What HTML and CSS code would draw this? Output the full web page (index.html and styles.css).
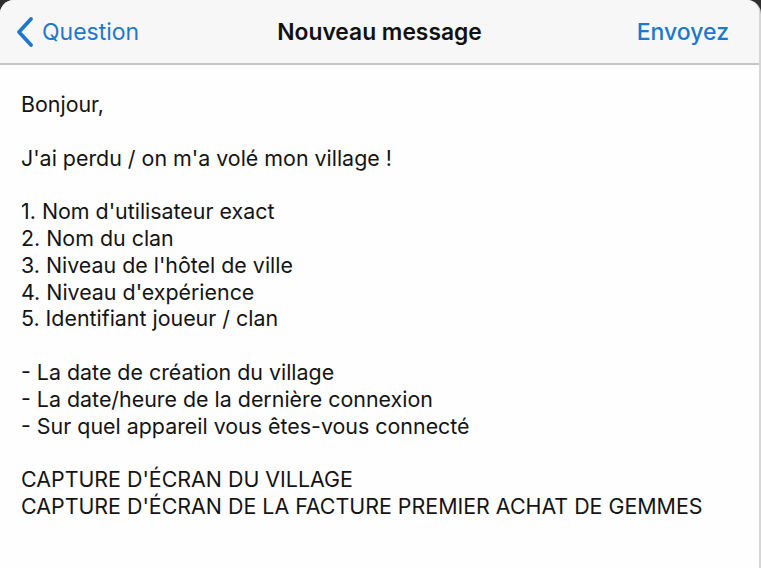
FILE: index.html
```html
<html>
<head>
<link rel="stylesheet" href="styles.css">
  <title>Nouveau message</title>
</head>
<body>
<div class="sheet">
  <div class="navbar">
    <a class="back" href="#">
      <svg class="chevron" width="20" height="32" viewBox="0 0 20 32">
        <path d="M17 3 L5 16 L17 29" fill="none" stroke="#1f78c8" stroke-width="3.8" stroke-linecap="round" stroke-linejoin="round"/>
      </svg>
      Question
    </a>
    <div class="title">Nouveau message</div>
    <a class="send" href="#">Envoyez</a>
  </div>
  <div class="body">
    <p>Bonjour,</p>
    <p>J'ai perdu / on m'a volé mon village !</p>
    <p>1. Nom d'utilisateur exact<br>
    2. Nom du clan<br>
    3. Niveau de l'hôtel de ville<br>
    4. Niveau d'expérience<br>
    5. Identifiant joueur / clan</p>
    <p>- La date de création du village<br>
    - La date/heure de la dernière connexion<br>
    - Sur quel appareil vous êtes-vous connecté</p>
    <p>CAPTURE D'ÉCRAN DU VILLAGE<br>
    CAPTURE D'ÉCRAN DE LA FACTURE PREMIER ACHAT DE GEMMES</p>
  </div>
</div>
</body>
</html>
```

FILE: styles.css
```css
/* page */
* {box-sizing: border-box;}

body {
  margin: 0;
  background-color: #2e2e2e;
  font-family: Inter, "Liberation Sans", Arial, sans-serif;
}

.sheet {
  height: 568px;
  background-color: #fefefe;
  border-radius: 14px 14px 0 0;
  overflow: hidden;
  border-right: 2px solid #d6d6d6;
}

/* top bar */
.navbar {
  height: 65px;
  background-color: #f7f7f7;
  border-bottom: 2px solid #c6c6c6;
  display: flex;
  align-items: center;
  justify-content: space-between;
  padding: 0 30px 0 14px;
  position: relative;
}

.navbar a {
  color: #1f78c8;
  text-decoration: none;
  font-size: 23px;
}

.back {
  display: flex;
  align-items: center;
  gap: 8px;
}

.chevron {
  margin-top: 1px;
}

.send {
  font-weight: 500;
}

.title {
  position: absolute;
  left: 0;
  right: 0;
  text-align: center;
  font-size: 22.8px;
  font-weight: 600;
  color: #111;
  pointer-events: none;
}

/* message text */
.body {
  padding: 26px 21px;
  font-size: 21.4px;
  line-height: 26.8px;
  color: #141414;
}

.body p {
  margin: 0 0 26.8px 0;
}
```
